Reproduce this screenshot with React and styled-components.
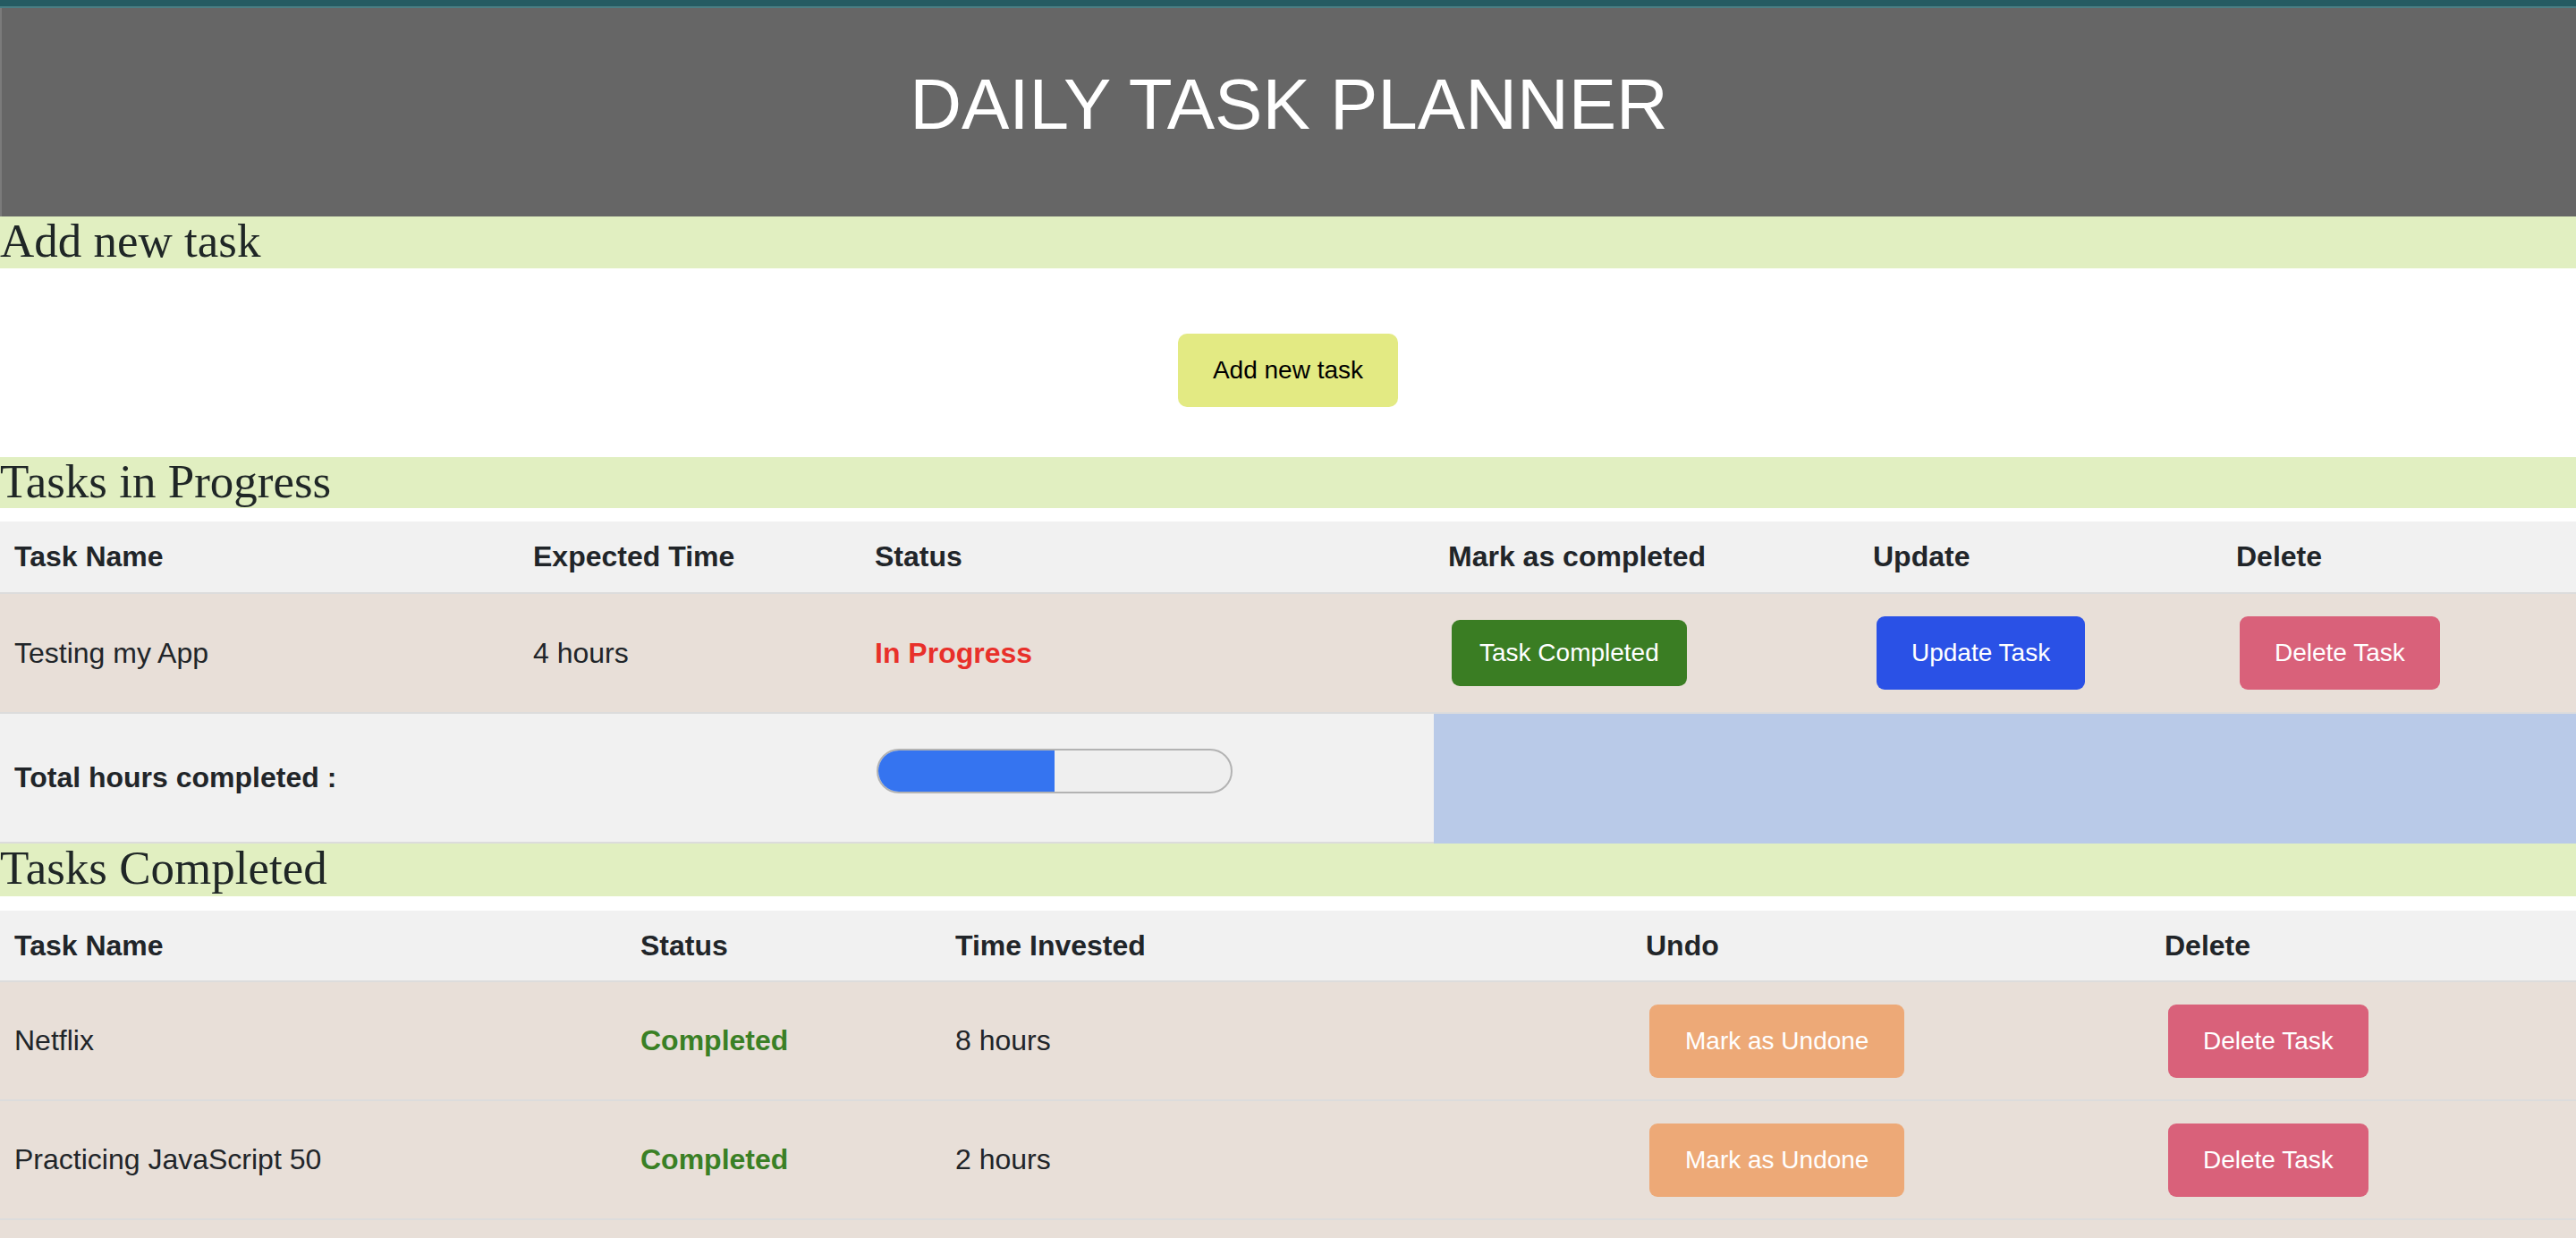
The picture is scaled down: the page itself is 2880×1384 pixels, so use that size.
import React from 'react';
import styled, { createGlobalStyle } from 'styled-components';

const GlobalStyle = createGlobalStyle`
  * {
    box-sizing: border-box;
  }
  body {
    margin: 0;
    background: #ffffff;
    font-family: 'Liberation Sans', Arial, sans-serif;
    color: #212529;
  }
`;

const TopStrip = styled.div`
  height: 9px;
  background: #255b62;
  border-bottom: 2px solid #4b7e84;
`;

const Header = styled.header`
  height: 233px;
  background: #666666;
  border-left: 2px solid #7b7b7b;
  display: flex;
  align-items: center;
  justify-content: center;
  padding-bottom: 18px;
`;

const Title = styled.h1`
  margin: 0;
  font-size: 80px;
  font-weight: 400;
  line-height: 1.15;
  color: #ffffff;
`;

const SectionBar = styled.h2`
  margin: 0;
  height: ${(p) => p.$h || 58}px;
  line-height: 55px;
  background: #e1efc1;
  font-family: 'Liberation Serif', Georgia, serif;
  font-size: 53px;
  font-weight: 400;
  color: #1f2626;
  white-space: nowrap;
`;

const AddArea = styled.div`
  display: flex;
  justify-content: center;
  padding: 73px 0 56px;
`;

const AddButton = styled.button`
  height: 82px;
  padding: 0 39px;
  border: none;
  border-radius: 10px;
  background: #e3ea83;
  color: #000000;
  font-family: 'Liberation Sans', Arial, sans-serif;
  font-size: 28px;
  cursor: pointer;
`;

const TableWrap = styled.div`
  margin-top: ${(p) => p.$gap}px;
  background: ${(p) => (p.$tail ? '#e8dfd8' : 'transparent')};
  padding-bottom: ${(p) => (p.$tail ? 40 : 0)}px;
`;

const Table = styled.table`
  width: 100%;
  table-layout: fixed;
  border-collapse: separate;
  border-spacing: 0;
  font-size: 32px;
`;

const Col = styled.col`
  width: ${(p) => p.$w}px;
`;

const HeadCell = styled.th`
  height: ${(p) => p.$h}px;
  padding: 0 16px;
  text-align: left;
  font-weight: 700;
  background: #f1f1f1;
  border-bottom: 2px solid #dcdcdc;
  white-space: nowrap;
`;

const Row = styled.tr`
  background: ${(p) => p.$bg || '#e8dfd8'};
`;

const Cell = styled.td`
  height: ${(p) => p.$h}px;
  padding: 0 16px;
  background: ${(p) => p.$bg || 'transparent'};
  border-bottom: 2px solid ${(p) => p.$line || '#dcdcdc'};
  font-weight: ${(p) => (p.$bold ? 700 : 400)};
  color: ${(p) => p.$color || '#212529'};
  white-space: nowrap;
  vertical-align: middle;
`;

const ActionButton = styled.button`
  height: ${(p) => p.$h || 82}px;
  margin-left: 4px;
  padding: 0 ${(p) => p.$px || 39}px;
  border: none;
  border-radius: 9px;
  background: ${(p) => p.$bg};
  color: #ffffff;
  font-family: 'Liberation Sans', Arial, sans-serif;
  font-size: 28px;
  cursor: pointer;
`;

const Progress = styled.div`
  width: 398px;
  height: 50px;
  margin: 0 0 16px 2px;
  border: 2px solid #b3b3b3;
  border-radius: 25px;
  background: #efefef;
  overflow: hidden;
`;

const ProgressFill = styled.div`
  height: 100%;
  background: #3574f0;
`;

const inProgress = [{ name: 'Testing my App', hours: 4 }];

const completed = [
  { name: 'Netflix', hours: 8 },
  { name: 'Practicing JavaScript 50', hours: 2 },
];

const doneHours = 2;
const totalHours = 4;

const App = () => {
  return (
    <>
      <GlobalStyle />
      <TopStrip />
      <Header>
        <Title>DAILY TASK PLANNER</Title>
      </Header>

      <SectionBar>Add new task</SectionBar>
      <AddArea>
        <AddButton>Add new task</AddButton>
      </AddArea>

      <SectionBar $h={57}>Tasks in Progress</SectionBar>
      <TableWrap $gap={15}>
        <Table>
          <colgroup>
            <Col $w={580} />
            <Col $w={382} />
            <Col $w={641} />
            <Col $w={475} />
            <Col $w={406} />
            <Col $w={396} />
          </colgroup>
          <thead>
            <tr>
              <HeadCell $h={81}>Task Name</HeadCell>
              <HeadCell $h={81}>Expected Time</HeadCell>
              <HeadCell $h={81}>Status</HeadCell>
              <HeadCell $h={81}>Mark as completed</HeadCell>
              <HeadCell $h={81}>Update</HeadCell>
              <HeadCell $h={81}>Delete</HeadCell>
            </tr>
          </thead>
          <tbody>
            {inProgress.map((task) => (
              <Row key={task.name}>
                <Cell $h={134}>{task.name}</Cell>
                <Cell $h={134}>{task.hours} hours</Cell>
                <Cell $h={134} $bold $color="#e8302a">In Progress</Cell>
                <Cell $h={134}>
                  <ActionButton $bg="#3a7d23" $h={74} $px={31}>Task Completed</ActionButton>
                </Cell>
                <Cell $h={134}>
                  <ActionButton $bg="#2a51e6">Update Task</ActionButton>
                </Cell>
                <Cell $h={134}>
                  <ActionButton $bg="#d9617a">Delete Task</ActionButton>
                </Cell>
              </Row>
            ))}
            <Row $bg="#f1f1f1">
              <Cell $h={145} colSpan={2} $bold>Total hours completed :</Cell>
              <Cell $h={145}>
                <Progress>
                  <ProgressFill style={{ width: `${(doneHours / totalHours) * 100}%` }} />
                </Progress>
              </Cell>
              <Cell $h={145} colSpan={3} $bg="#b9cae8" $line="#b9cae8" />
            </Row>
          </tbody>
        </Table>
      </TableWrap>

      <SectionBar $h={59}>Tasks Completed</SectionBar>
      <TableWrap $gap={16} $tail>
        <Table>
          <colgroup>
            <Col $w={700} />
            <Col $w={352} />
            <Col $w={772} />
            <Col $w={580} />
            <Col $w={476} />
          </colgroup>
          <thead>
            <tr>
              <HeadCell $h={80}>Task Name</HeadCell>
              <HeadCell $h={80}>Status</HeadCell>
              <HeadCell $h={80}>Time Invested</HeadCell>
              <HeadCell $h={80}>Undo</HeadCell>
              <HeadCell $h={80}>Delete</HeadCell>
            </tr>
          </thead>
          <tbody>
            {completed.map((task) => (
              <Row key={task.name}>
                <Cell $h={133}>{task.name}</Cell>
                <Cell $h={133} $bold $color="#3a8025">Completed</Cell>
                <Cell $h={133}>{task.hours} hours</Cell>
                <Cell $h={133}>
                  <ActionButton $bg="#eda977" $px={40}>Mark as Undone</ActionButton>
                </Cell>
                <Cell $h={133}>
                  <ActionButton $bg="#d9617a">Delete Task</ActionButton>
                </Cell>
              </Row>
            ))}
          </tbody>
        </Table>
      </TableWrap>
    </>
  );
};

export default App;
